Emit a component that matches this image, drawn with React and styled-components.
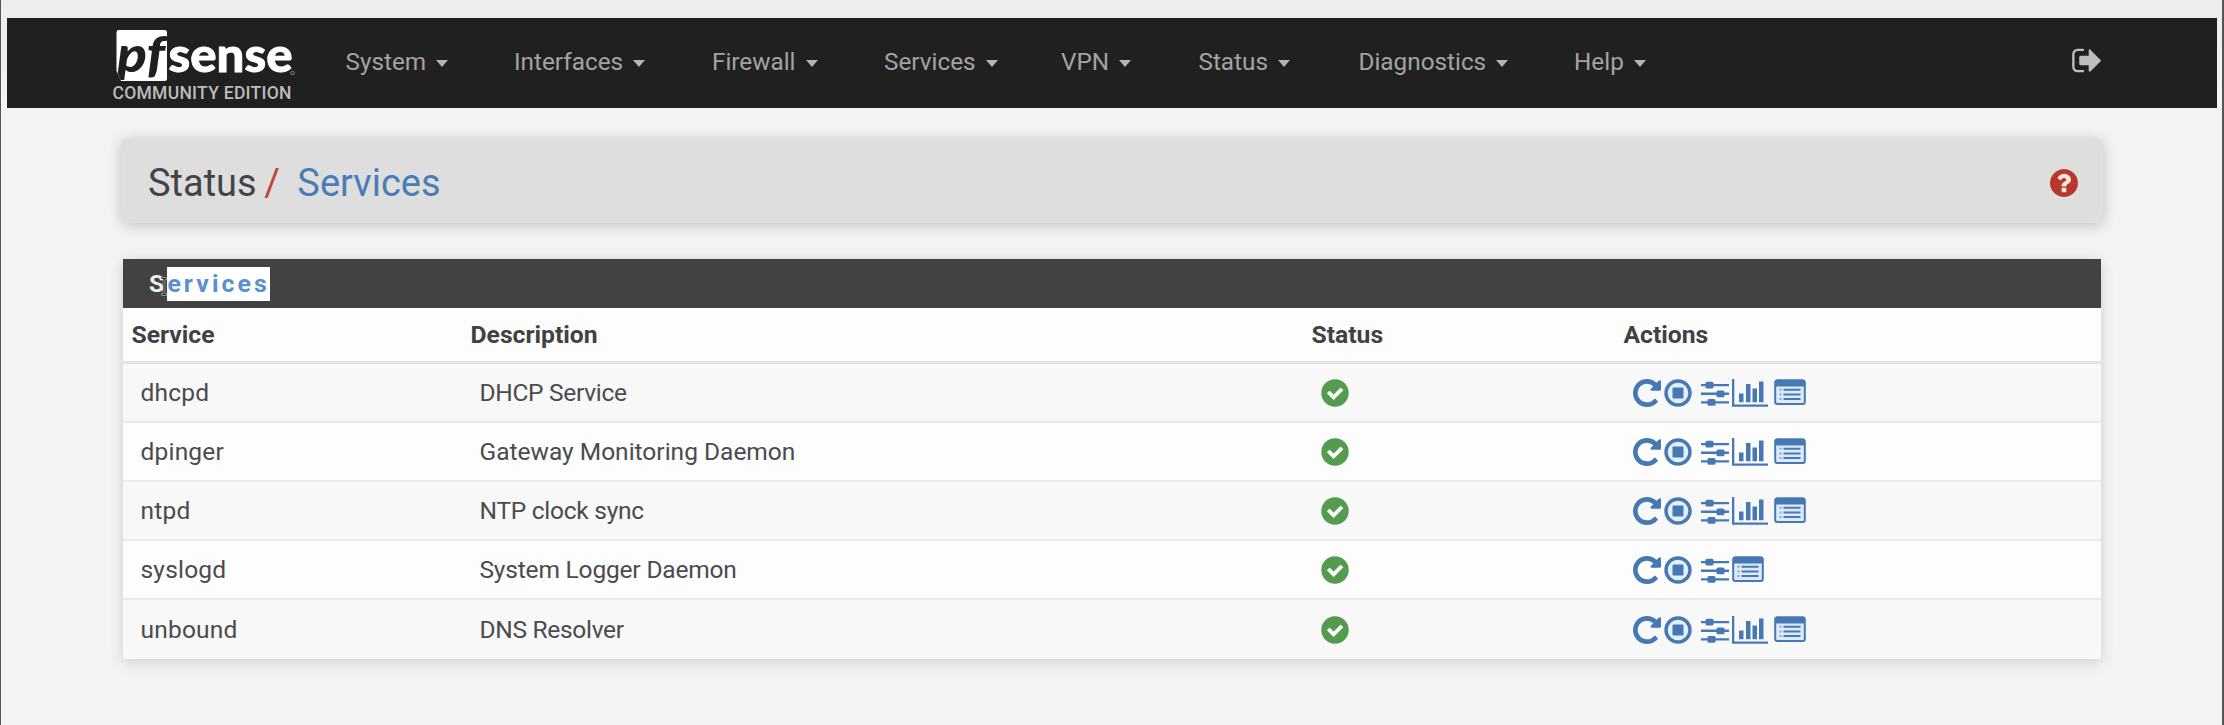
import React from "react";
import styled, { createGlobalStyle } from "styled-components";

const GlobalStyle = createGlobalStyle`
  * { box-sizing: border-box; }
  body {
    margin: 0;
    background: #f3f3f3;
    font-family: Roboto, "Liberation Sans", sans-serif;
    font-size: 24.5px;
    color: #4b4b4d;
  }
`;

const Page = styled.div`
  height: 725px;
  border-left: 1px solid #555;
  border-right: 2px solid #555;
  padding: 18px 5px 0 6px;
  background: linear-gradient(#ededed 0, #eeeeee 18px, #f3f3f3 108px);
  overflow: hidden;
`;

const Navbar = styled.nav`
  height: 90px;
  background: #202020;
  display: flex;
  align-items: flex-start;
  padding: 0 113px 0 104px;
`;

const Logo = styled.svg`
  width: 190px;
  height: 90px;
  flex: none;
`;

const Menu = styled.ul`
  display: flex;
  list-style: none;
  margin: 0 auto 0 44.5px;
  padding: 27px 0 0;
`;

const MenuItem = styled.li`
  width: ${(p) => p.$width}px;
  display: flex;
  align-items: center;
  gap: 10px;
  height: 34px;
  line-height: 34px;
  font-size: 24.3px;
  color: #a3a3a3;
`;

const Caret = styled.span`
  margin-top: 3px;
  border: 6.5px solid transparent;
  border-top: 7px solid #b4b4b4;
  border-bottom: 0;
`;

const Logout = styled.a`
  display: flex;
  padding-top: 26px;
  color: #bdbdc0;
`;

const Content = styled.main`
  padding: 31px 114px 0 115px;
`;

const Heading = styled.header`
  height: 84px;
  display: flex;
  align-items: center;
  justify-content: space-between;
  padding: 3px 25px 0 26px;
  border-radius: 5px;
  background: #dedede;
  box-shadow: 0 2px 14px rgba(0, 0, 0, 0.22);
`;

const Crumbs = styled.h1`
  margin: 0;
  font-size: 38px;
  font-weight: 400;
  line-height: 46px;
  color: #444446;
  display: flex;
`;

const Slash = styled.span`
  color: #c0433a;
  margin: 0 17.5px 0 7.5px;
`;

const Current = styled.a`
  color: #4a7db8;
`;

const Panel = styled.section`
  margin: 36px 2px 0 1px;
  box-shadow: 0 3px 14px rgba(0, 0, 0, 0.15);
`;

const PanelTitle = styled.h2`
  position: relative;
  margin: 0;
  height: 49px;
  padding: 0 0 0 26px;
  background: #424242;
  color: #ededed;
  font-size: 24.8px;
  font-weight: 700;
  line-height: 34px;
  letter-spacing: 3.1px;
  display: flex;
  align-items: center;
`;

const Selected = styled.span`
  height: 34px;
  background: #fff;
  color: #5990d2;
`;

const Cursor = styled.svg`
  position: absolute;
  left: 37px;
  top: 18px;
  width: 8px;
  height: 19px;
`;

const Table = styled.table`
  width: 100%;
  table-layout: fixed;
  border-collapse: separate;
  border-spacing: 0;
  background: #fdfdfd;
`;

const HeadCell = styled.th`
  width: ${(p) => (p.$width ? `${p.$width}px` : "auto")};
  height: 56px;
  padding: 0 8.5px;
  text-align: left;
  font-weight: 700;
  font-size: 24.7px;
  color: #414144;
  border-bottom: 3px solid #e3e3e3;
`;

const Row = styled.tr`
  background: ${(p) => (p.$striped ? "#f8f8f8" : "#fdfdfd")};
  &:not(:last-child) td { border-bottom: 2px solid #ebebeb; }
`;

const Cell = styled.td`
  height: 59px;
  padding: 0 0 0 17.5px;
  line-height: 32px;
  letter-spacing: ${(p) => p.$tracking || 0}px;
`;

const IconLine = styled.div`
  display: flex;
  align-items: center;
  color: ${(p) => p.$color};
`;

const Glyph = styled.svg`
  display: block;
  flex: none;
  fill: currentColor;
  margin-left: ${(p) => p.$gap || 0}px;
`;

const Check = () => (
  <Glyph width="28" height="28" viewBox="0 0 28 28">
    <circle cx="14" cy="14" r="13.7" />
    <path d="M6.2 14.3l2.4-2.4 4 4 7-7 2.4 2.4-9.4 9.4z" fill="#fff" stroke="#fff" strokeWidth=".6" strokeLinejoin="round" />
  </Glyph>
);

const Help = () => (
  <Glyph width="28" height="28" viewBox="128 128 1536 1536" style={{ color: "#b5382b" }}>
    <circle cx="896" cy="896" r="750" fill="#f9e4e0" />
    <path d="M1024 1376v-192q0-14-9-23t-23-9h-192q-14 0-23 9t-9 23v192q0 14 9 23t23 9h192q14 0 23-9t9-23zm256-672q0-88-55.5-163t-138.5-116-170-41q-243 0-371 213-15 24 8 42l132 100q7 6 19 6 16 0 25-12 53-68 86-92 34-24 86-24 48 0 85.500 26t37.500 59q0 38-20 61t-68 45q-63 28-115.500 86.500t-52.500 125.500v36q0 14 9 23t23 9h192q14 0 23-9t9-23q0-19 21.500-49.500t54.500-49.500q32-18 49-28.500t46-35 44.500-48 28-60.500 12.500-81zm384 192q0 209-103 385.500t-279.500 279.500-385.500 103-385.500-103-279.500-279.500-103-385.500 103-385.500 279.500-279.500 385.500-103 385.500 103 279.500 279.500 103 385.500z" />
  </Glyph>
);

const SignOut = () => (
  <Glyph width="33" height="33" viewBox="0 0 1792 1792">
    <path d="M704 1440q0 4 1 20t.5 26.500-3 23.500-10 19.500-20.500 6.500h-320q-119 0-203.500-84.500t-84.500-203.500v-704q0-119 84.500-203.500t203.500-84.500h320q13 0 22.500 9.500t9.500 22.500q0 4 1 20t.5 26.500-3 23.500-10 19.500-20.500 6.500h-320q-66 0-113 47t-47 113v704q0 66 47 113t113 47h312l11.500 1 11.500 3 8 5.500 7 9 2 13.500zm928-544q0 26-19 45l-544 544q-19 19-45 19t-45-19-19-45v-288h-448q-26 0-45-19t-19-45v-384q0-26 19-45t45-19h448v-288q0-26 19-45t45-19 45 19 19 45l544 544q19 19 19 45z" />
  </Glyph>
);

const Restart = () => (
  <Glyph width="28" height="28" viewBox="128 128 1536 1536">
    <path d="M1664 256v448q0 26-19 45t-45 19h-448q-42 0-59-40-17-39 14-69l138-138q-148-137-349-137-104 0-198.500 40.500t-163.500 109.500-109.500 163.500-40.500 198.500 40.500 198.500 109.500 163.500 163.500 109.500 198.500 40.500q119 0 225-52t179-147q7-10 23-12 15 0 25 9l137 138q9 8 9.500 20.500t-7.500 22.500q-109 132-264 204.500t-327 72.500q-156 0-298-61t-245-164-164-245-61-298 61-298 164-245 245-164 298-61q147 0 284.500 55.500t244.500 156.500l130-129q29-31 70-14 39 17 39 59z" />
  </Glyph>
);

const Stop = () => (
  <Glyph width="28" height="28" viewBox="0 0 28 28" $gap={3}>
    <circle cx="14" cy="14" r="12" fill="#e3effb" stroke="currentColor" strokeWidth="3.4" />
    <rect x="8.500" y="8.500" width="11" height="11" rx="1" />
  </Glyph>
);

const Sliders = () => (
  <Glyph width="28" height="28" viewBox="0 0 28 28" $gap={9}>
    <path d="M0 5h28v2.300H0zM0 13.600h28v2.300H0zM0 22.300h28v2.300H0z" />
    <rect x="4.500" y="2.700" width="8" height="6.800" rx="1.500" />
    <rect x="15.500" y="11.400" width="8" height="6.800" rx="1.500" />
    <rect x="6.500" y="20" width="8" height="6.800" rx="1.500" />
  </Glyph>
);

const Chart = () => (
  <Glyph width="36" height="28" viewBox="0 0 36 28" $gap={3}>
    <path d="M0 0h2.300v25.400H36v2.300H0z" />
    <path d="M7 14.500h4.500v8.700H7zM14 5h4.500v18.200H14zM20.500 9.500H25v13.700h-4.500zM27 2.500h4.500v20.700H27z" />
  </Glyph>
);

const Log = ({ gap }) => (
  <Glyph width="32" height="28" viewBox="0 0 32 28" $gap={gap}>
    <rect x="1.200" y="1.500" width="29.600" height="23.500" rx="2" fill="#dceafa" stroke="currentColor" strokeWidth="2" />
    <path d="M1 2.500Q1 .5 3 .5h26q2 0 2 2v5H1z" />
    <path d="M5.500 9.800h2v2h-2zM5.500 14.400h2v2h-2zM5.500 19h2v2h-2z" opacity=".6" />
    <path d="M9.500 9.800h17v2h-17zM9.500 14.400h17v2h-17zM9.500 19h17v2h-17z" />
  </Glyph>
);

const menus = [
  ["System", 168.5],
  ["Interfaces", 198],
  ["Firewall", 172],
  ["Services", 177],
  ["VPN", 137.5],
  ["Status", 160],
  ["Diagnostics", 215.5],
  ["Help", 90],
];

const services = [
  { name: "dhcpd", description: "DHCP Service", chart: true, tracking: -0.3 },
  { name: "dpinger", description: "Gateway Monitoring Daemon", chart: true, tracking: 0 },
  { name: "ntpd", description: "NTP clock sync", chart: true, tracking: -0.25 },
  { name: "syslogd", description: "System Logger Daemon", chart: false, tracking: -0.18 },
  { name: "unbound", description: "DNS Resolver", chart: true, tracking: -0.3 },
];

const Brand = () => (
  <Logo viewBox="111 18 190 90">
    <defs>
      <clipPath id="tile">
        <path d="M118.500 30H164.500Q167 30 167 32.500V78.500Q167 81 164.500 81H121L116.500 71V32.500Q116.500 30 118.500 30z" />
      </clipPath>
    </defs>
    <g clipPath="url(#tile)">
      <rect x="116" y="30" width="51" height="51" fill="#fff" />
      <text x="117" y="72" fontFamily="Lato" fontWeight="900" fontStyle="italic" fontSize="50" fill="#202020" textLength="48" lengthAdjust="spacingAndGlyphs">pf</text>
    </g>
    <text x="168.500" y="72" fontFamily="Lato" fontWeight="900" fontSize="48" fill="#fff" stroke="#fff" strokeWidth=".8" textLength="124" lengthAdjust="spacingAndGlyphs">sense</text>
    <circle cx="292.500" cy="73" r="1.700" fill="none" stroke="#999" strokeWidth=".8" />
    <text x="112.500" y="98.500" fontFamily="Roboto" fontWeight="500" fontSize="17.500" fill="#bcbcbc" textLength="179">COMMUNITY EDITION</text>
  </Logo>
);

export default function App() {
  return (
    <Page>
      <GlobalStyle />
      <Navbar>
        <Brand />
        <Menu>
          {menus.map(([label, width]) => (
            <MenuItem key={label} $width={width}>
              {label}
              <Caret />
            </MenuItem>
          ))}
        </Menu>
        <Logout>
          <SignOut />
        </Logout>
      </Navbar>
      <Content>
        <Heading>
          <Crumbs>
            <span>Status</span>
            <Slash>/</Slash>
            <Current>Services</Current>
          </Crumbs>
          <Help />
        </Heading>
        <Panel>
          <PanelTitle>
            <span>S</span>
            <Selected>ervices</Selected>
            <Cursor viewBox="0 0 8 19">
              <path d="M1 1h2l1 1 1-1h2M4 2v15M1 18h2l1-1 1 1h2" fill="none" stroke="#ddd" strokeWidth="2.400" />
              <path d="M1 1h2l1 1 1-1h2M4 2v15M1 18h2l1-1 1 1h2" fill="none" stroke="#111" strokeWidth="1.200" />
            </Cursor>
          </PanelTitle>
          <Table>
            <thead>
              <tr>
                <HeadCell $width={339}>Service</HeadCell>
                <HeadCell $width={841}>Description</HeadCell>
                <HeadCell $width={312}>Status</HeadCell>
                <HeadCell>Actions</HeadCell>
              </tr>
            </thead>
            <tbody>
              {services.map((s, i) => (
                <Row key={s.name} $striped={i % 2 === 0}>
                  <Cell $tracking={0.2}>{s.name}</Cell>
                  <Cell $tracking={s.tracking}>{s.description}</Cell>
                  <Cell>
                    <IconLine $color="#549b50">
                      <Check />
                    </IconLine>
                  </Cell>
                  <Cell>
                    <IconLine $color="#4678b4">
                      <Restart />
                      <Stop />
                      <Sliders />
                      {s.chart && <Chart />}
                      <Log gap={s.chart ? 6 : 3} />
                    </IconLine>
                  </Cell>
                </Row>
              ))}
            </tbody>
          </Table>
        </Panel>
      </Content>
    </Page>
  );
}
